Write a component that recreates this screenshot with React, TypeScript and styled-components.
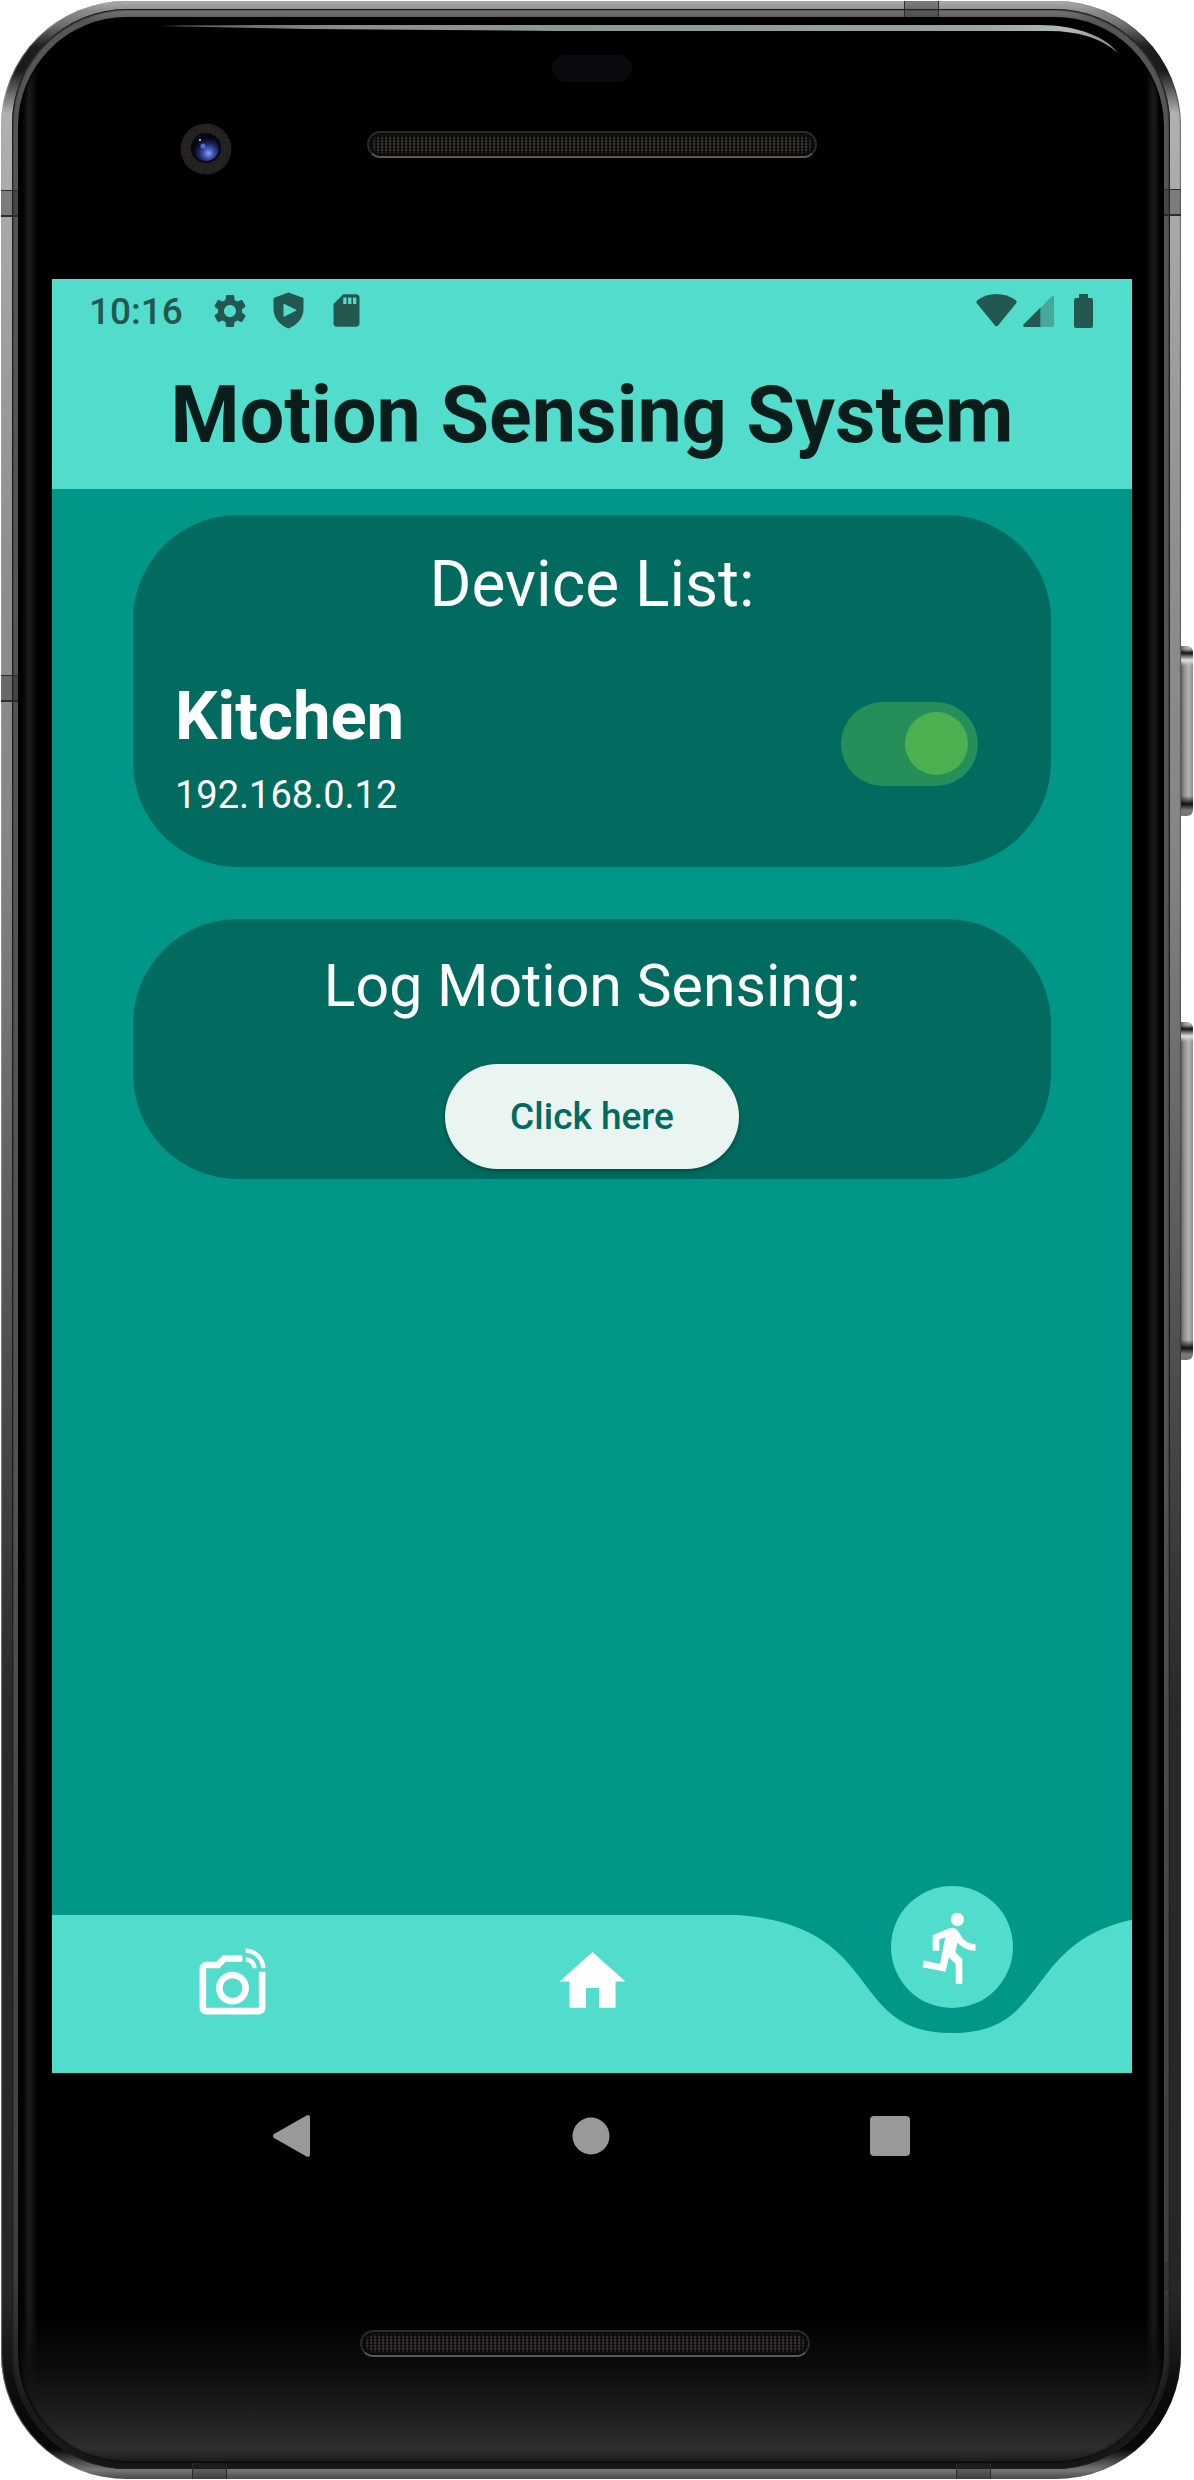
import React, { useState } from "react";
import styled, { createGlobalStyle, css } from "styled-components";
import { MdDirectionsRun, MdHome, MdSdCard, MdSettings } from "react-icons/md";

const color = {
  mint: "#52dccb",
  teal: "#009788",
  card: "#006b5e",
  status: "#225850",
  statusFaint: "#43a999",
  ink: "#0a1d1a",
  pale: "#eaf4f1",
  system: "#999999",
};

const GlobalStyle = createGlobalStyle`
  *, *::before, *::after { box-sizing: border-box; }
  body { margin: 0; background: #ffffff; font-family: Roboto, "Noto Sans", sans-serif; }
  button { font: inherit; border: 0; padding: 0; background: none; cursor: pointer; }
  svg { display: block; flex: none; }
`;

/* ---------- handset ---------- */

const Stage = styled.div`
  position: relative;
  display: flex;
  min-height: 100vh;
  padding: 1px 13px 1px 1px;
`;

const Rim = styled.div`
  position: relative;
  flex: 1;
  display: flex;
  padding: 8px 11px 10px;
  border-radius: 125px;
  background: linear-gradient(
    180deg,
    #a9aeac 0,
    #8a8d8c 10px,
    #6f6f6f 24px,
    #1e1e1e 46px,
    #1a1a1a 70px,
    #b0b0b0 112px,
    #8e8e8e 560px,
    #858585 840px,
    #6a6a6a 1100px,
    #4a4a4a 1400px,
    #2a2a2a 1700px,
    #262626 calc(100% - 180px),
    #0a0a0a calc(100% - 80px),
    #080808 calc(100% - 30px),
    #787878 calc(100% - 9px),
    #484848 100%
  );
  box-shadow: inset 1px 0 1px rgba(160, 170, 168, 0.6), inset -1px 0 1px rgba(40, 40, 40, 0.5);
`;

const InnerRim = styled.div`
  flex: 1;
  display: flex;
  padding: 8px 6px 6px;
  border-radius: 115px;
  background: linear-gradient(180deg, #7a7a7a 0, #565656 12px, #525252 60%, #3e3e3e calc(100% - 200px), #1a1a1a calc(100% - 60px), #161616 100%);
  box-shadow: inset 0 0 0 1px #1d1d1d, inset 0 0 1px 2px rgba(30, 30, 30, 0.35);
`;

const Glass = styled.div`
  position: relative;
  flex: 1;
  display: flex;
  flex-direction: column;
  padding: 0 32px 0 34px;
  border-radius: 109px;
  background:
    linear-gradient(0deg, #1c1c1c 0, #2e2e2e 14px, #191919 60px, rgba(14, 14, 14, 0.8) 96px, rgba(0, 0, 0, 0) 150px),
    linear-gradient(90deg, #000 0, #000 4px, #1b1b1b 11px, #000 20px, #000 calc(100% - 18px), #1b1b1b calc(100% - 10px), #000 calc(100% - 4px));
  box-shadow: inset 0 0 3px 1px #000;
`;

const Glare = styled.svg`
  position: absolute;
  top: 7px;
  left: 141px;
  width: calc(100% - 187px);
  height: 30px;
`;

const SideKey = styled.div<{ $top: number; $height: number }>`
  position: absolute;
  right: 1px;
  top: ${(p) => p.$top}px;
  width: 12px;
  height: ${(p) => p.$height}px;
  border-radius: 0 6px 6px 0;
  background:
    linear-gradient(180deg, transparent 3px, #111 7px, #ddd 14px, transparent 20px, transparent calc(100% - 20px), #111 calc(100% - 12px), #777 calc(100% - 6px)),
    linear-gradient(90deg, #5a5a5a 0, #8f8f8f 3px, #b4b4b4 8px, #8a8a8a 12px);
`;

const Band = styled.div<{ $side: "left" | "right" | "top" | "bottom"; $at: string }>`
  position: absolute;
  background: rgba(40, 40, 40, 0.35);
  ${(p) =>
    p.$side === "left" || p.$side === "right"
      ? css`
          ${p.$side}: 0;
          top: ${p.$at};
          width: 17px;
          height: 27px;
          border-top: 1px solid #2b2b2b;
          border-bottom: 2px solid #2b2b2b;
        `
      : css`
          ${p.$side}: 0;
          left: ${p.$at};
          width: 35px;
          height: 16px;
          border-left: 1px solid #2b2b2b;
          border-right: 1px solid #2b2b2b;
        `}
`;

const TopBezel = styled.div`
  flex: none;
  height: 262px;
  padding-top: 38px;
`;

const Sensor = styled.div`
  width: 80px;
  height: 27px;
  margin: 0 auto 41px;
  border-radius: 14px;
  background: #090a0d;
`;

const BezelRow = styled.div`
  display: grid;
  grid-template-columns: minmax(0, 1fr) auto minmax(0, 1fr);
  align-items: start;
`;

const Lens = styled.svg`
  margin-left: 128px;
`;

const Speaker = styled.div`
  width: 450px;
  height: 27px;
  margin-top: 8px;
  border: 2px solid #2c2a29;
  border-bottom-color: #5c5855;
  border-radius: 14px;
  background:
    radial-gradient(circle at 1px 1px, #57524a 0, #2c2926 1px, transparent 2px) 4px 4px / 4px 3px,
    #0c0b0a;
  box-shadow: inset 0 0 3px 3px #0a0a0a;
`;

const BottomBezel = styled.div`
  flex: none;
  display: flex;
  justify-content: center;
  height: 264px;
  padding: 123px 14px 0 0;
`;

/* ---------- app ---------- */

const Screen = styled.div`
  flex: 1;
  display: flex;
  flex-direction: column;
  background: ${color.teal};
`;

const Header = styled.header`
  background: ${color.mint};
`;

const StatusBar = styled.div`
  display: flex;
  justify-content: space-between;
  align-items: center;
  height: 63px;
  padding: 0 39px 0 37px;
  color: ${color.status};
`;

const StatusGroup = styled.div<{ $gap: number }>`
  display: flex;
  align-items: center;
  gap: ${(p) => p.$gap}px;
`;

const Clock = styled.time`
  margin-right: 8px;
  padding-top: 2px;
  font-size: 37px;
  line-height: 44px;
  font-weight: 500;
`;

const BatteryIcon = styled.svg`
  margin-left: 14px;
`;

const AppTitle = styled.h1`
  margin: 0;
  color: ${color.ink};
  font-size: 79px;
  line-height: 147px;
  font-weight: 700;
  text-align: center;
  white-space: nowrap;
`;

const Main = styled.main`
  flex: 1;
  display: flex;
  flex-direction: column;
  align-items: center;
  gap: 52px;
  padding: 26px 0;
`;

const Card = styled.section<{ $bottom: number }>`
  width: 85%;
  padding: 32px 0 ${(p) => p.$bottom}px;
  border-radius: 105px;
  background: ${color.card};
  color: #ffffff;
`;

const CardTitle = styled.h2<{ $size: number; $line: number }>`
  margin: 0 0 43px;
  font-size: ${(p) => p.$size}px;
  line-height: ${(p) => p.$line}px;
  font-weight: 400;
  text-align: center;
`;

const DeviceRow = styled.label`
  display: flex;
  justify-content: space-between;
  align-items: center;
  padding: 0 73px 0 42px;
`;

const DeviceText = styled.span`
  display: flex;
  flex-direction: column;
  gap: 15px;
  padding-top: 12px;
`;

const DeviceName = styled.span`
  font-size: 67px;
  line-height: 76px;
  font-weight: 700;
`;

const DeviceAddress = styled.span`
  font-size: 38px;
  line-height: 52px;
`;

const Switch = styled.input`
  appearance: none;
  display: flex;
  align-items: center;
  justify-content: flex-start;
  flex: none;
  width: 137px;
  height: 84px;
  margin: 0;
  padding: 0 10px;
  border-radius: 42px;
  background: #4a7f77;
  cursor: pointer;

  &::before {
    content: "";
    width: 63px;
    height: 63px;
    border-radius: 50%;
    background: #c5d6d2;
  }

  &:checked {
    justify-content: flex-end;
    background: #268e58;
  }

  &:checked::before {
    background: #4cb050;
  }
`;

const PillButton = styled.button`
  display: block;
  min-width: 294px;
  height: 105px;
  margin: 0 auto;
  padding: 0 63px;
  border-radius: 53px;
  background: ${color.pale};
  box-shadow: 0 2px 4px rgba(0, 0, 0, 0.3);
  color: ${color.card};
  font-size: 37px;
  line-height: 44px;
  font-weight: 500;
`;

const TabBar = styled.nav`
  position: relative;
  display: grid;
  grid-template-columns: repeat(3, 1fr);
  justify-items: center;
  align-items: start;
  height: 158px;
  color: #ffffff;
`;

const TabCurve = styled.svg`
  position: absolute;
  inset: 0;
  width: 100%;
  height: 100%;
`;

const Tab = styled.button<{ $active?: boolean }>`
  position: relative;
  display: grid;
  place-items: center;
  width: 122px;
  height: 122px;
  margin-top: ${(p) => (p.$active ? "-29px" : "5px")};
  border-radius: 50%;
  background: ${(p) => (p.$active ? color.mint : "none")};
  color: inherit;
`;

const SystemBar = styled.div`
  display: flex;
  justify-content: center;
  gap: 173px;
  padding-right: 3px;
  background: #000000;
  color: ${color.system};
`;

const SystemButton = styled.button`
  display: grid;
  place-items: center;
  width: 126px;
  height: 126px;
  color: inherit;
`;

function LinkedCamera() {
  return (
    <svg width="79" height="79" viewBox="0 0 24 24" fill="currentColor" aria-hidden="true">
      <path d="M16 3.33c2.58 0 4.67 2.09 4.67 4.67H22c0-3.31-2.69-6-6-6v1.33M16 6c1.11 0 2 .89 2 2h1.33c0-1.84-1.49-3.33-3.33-3.33V6" />
      <path d="M20 9v11H4V8h4.05l1.83-2H15V4H9L7.17 6H4c-1.1 0-2 .9-2 2v12c0 1.1.9 2 2 2h16c1.1 0 2-.9 2-2V9h-2z" />
      <path fillRule="evenodd" d="M12 9a5 5 0 1 0 0 10 5 5 0 0 0 0-10zm0 2a3 3 0 1 1 0 6 3 3 0 0 1 0-6z" />
    </svg>
  );
}

function ShieldPlay() {
  return (
    <svg width="39" height="39" viewBox="0 0 39 39" fill="currentColor" aria-hidden="true">
      <path
        fillRule="evenodd"
        d="M19.500 1.500 34.500 7v11c0 8.500-6 16-15 19.500C10.500 34 4.500 26.500 4.500 18V7zM14.500 12.500v13.500L28 19.200z"
      />
    </svg>
  );
}

export default function App() {
  const [kitchenOn, setKitchenOn] = useState(true);

  return (
    <>
      <GlobalStyle />
      <Stage>
        <SideKey $top={646} $height={170} />
        <SideKey $top={1022} $height={338} />
        <Rim>
          <InnerRim>
            <Glass>
              <Glare viewBox="0 0 959 30" preserveAspectRatio="none" aria-hidden="true">
                <defs>
                  <linearGradient id="glare" x1="0" x2="1" y1="0" y2="0">
                    <stop offset="0" stopColor="#4f5c5a" />
                    <stop offset="0.2" stopColor="#87908f" />
                    <stop offset="0.85" stopColor="#9aa3a2" />
                    <stop offset="0.95" stopColor="#b2bab8" />
                    <stop offset="1" stopColor="#7c8584" />
                  </linearGradient>
                </defs>
                <path fill="url(#glare)" d="M0 2Q60 1 140 1H880C920 1 948 14 959 29Q934 7 890 7H400L150 5Z" />
              </Glare>
              <TopBezel>
                <Sensor />
                <BezelRow>
                  <Lens width="52" height="52" viewBox="0 0 52 52" aria-hidden="true">
                    <defs>
                      <radialGradient id="lens" cx="0.6" cy="0.7" r="0.6">
                        <stop offset="0" stopColor="#8ea6f2" />
                        <stop offset="0.3" stopColor="#4059b5" />
                        <stop offset="0.65" stopColor="#17225c" />
                        <stop offset="1" stopColor="#05060f" />
                      </radialGradient>
                    </defs>
                    <circle cx="26" cy="26" r="25.500" fill="#242020" />
                    <circle cx="26" cy="26" r="20" fill="none" stroke="#2a2626" strokeWidth="5" strokeDasharray="2 3" />
                    <circle cx="26" cy="25" r="15" fill="#07070c" />
                    <circle cx="26" cy="25" r="13" fill="url(#lens)" />
                    <circle cx="23" cy="23" r="2.500" fill="#4e6bd0" />
                    <circle cx="20" cy="17" r="1" fill="#c9d4ff" />
                  </Lens>
                  <Speaker />
                </BezelRow>
              </TopBezel>

              <Screen>
                <Header>
                  <StatusBar>
                    <StatusGroup $gap={19}>
                      <Clock>10:16</Clock>
                      <MdSettings size={40} />
                      <ShieldPlay />
                      <MdSdCard size={39} />
                    </StatusGroup>
                    <StatusGroup $gap={6}>
                      <svg width="41" height="34" viewBox="0 0 41 34" fill="currentColor" aria-hidden="true">
                        <path d="M1 9.500Q-.5 7.500 1.500 6Q10 0 20.500 0T39.500 6Q41.500 7.500 40 9.500L22 31.500Q20.500 33 19 31.500Z" />
                      </svg>
                      <svg width="31" height="34" viewBox="0 0 31 34" aria-hidden="true">
                        <path fill={color.statusFaint} d="M17.500 14 28.500 2.500Q31 1 31 4V31Q31 33 29 33H17.500Z" />
                        <path fill={color.status} d="M17.500 13.500V33H1.500Q-.5 32.500 .5 30.500Z" />
                      </svg>
                      <BatteryIcon width="19" height="34" viewBox="0 0 19 34" fill="currentColor" aria-hidden="true">
                        <path d="M5 0h9v4h3q2 0 2 2v26q0 2-2 2H2q-2 0-2-2V6q0-2 2-2h3z" />
                      </BatteryIcon>
                    </StatusGroup>
                  </StatusBar>
                  <AppTitle>Motion Sensing System</AppTitle>
                </Header>

                <Main>
                  <Card $bottom={46}>
                    <CardTitle $size={64} $line={76}>Device List:</CardTitle>
                    <DeviceRow>
                      <DeviceText>
                        <DeviceName>Kitchen</DeviceName>
                        <DeviceAddress>192.168.0.12</DeviceAddress>
                      </DeviceText>
                      <Switch
                        type="checkbox"
                        role="switch"
                        checked={kitchenOn}
                        onChange={(e) => setKitchenOn(e.target.checked)}
                      />
                    </DeviceRow>
                  </Card>
                  <Card $bottom={10}>
                    <CardTitle $size={59} $line={70}>Log Motion Sensing:</CardTitle>
                    <PillButton type="button">Click here</PillButton>
                  </Card>
                </Main>

                <TabBar aria-label="Sections">
                  <TabCurve viewBox="0 0 1080 158" preserveAspectRatio="none" aria-hidden="true">
                    <path
                      fill={color.mint}
                      d="M0 0H684C835 10 792 118 900 118C1008 118 965 10 1116 0V158H0Z"
                    />
                  </TabCurve>
                  <Tab type="button" aria-label="Cameras">
                    <LinkedCamera />
                  </Tab>
                  <Tab type="button" aria-label="Home">
                    <MdHome size={79} />
                  </Tab>
                  <Tab type="button" aria-label="Motion" $active>
                    <MdDirectionsRun size={79} />
                  </Tab>
                </TabBar>

                <SystemBar>
                  <SystemButton type="button" aria-label="Back">
                    <svg width="37" height="42" viewBox="0 0 37 42" fill="currentColor" aria-hidden="true">
                      <path d="M33.500 .5Q37-1 37 3V39Q37 43 33.500 41.500L1 23Q-1 21 1 19Z" />
                    </svg>
                  </SystemButton>
                  <SystemButton type="button" aria-label="Home screen">
                    <svg width="38" height="38" viewBox="0 0 38 38" fill="currentColor" aria-hidden="true">
                      <circle cx="19" cy="19" r="18.500" />
                    </svg>
                  </SystemButton>
                  <SystemButton type="button" aria-label="Recent apps">
                    <svg width="40" height="40" viewBox="0 0 40 40" fill="currentColor" aria-hidden="true">
                      <rect width="40" height="40" rx="4" />
                    </svg>
                  </SystemButton>
                </SystemBar>
              </Screen>

              <BottomBezel>
                <Speaker />
              </BottomBezel>
            </Glass>
          </InnerRim>
          <Band $side="left" $at="189px" />
          <Band $side="left" $at="674px" />
          <Band $side="right" $at="188px" />
          <Band $side="right" $at="calc(100% - 217px)" />
          <Band $side="top" $at="903px" />
          <Band $side="bottom" $at="191px" />
          <Band $side="bottom" $at="955px" />
        </Rim>
      </Stage>
    </>
  );
}
